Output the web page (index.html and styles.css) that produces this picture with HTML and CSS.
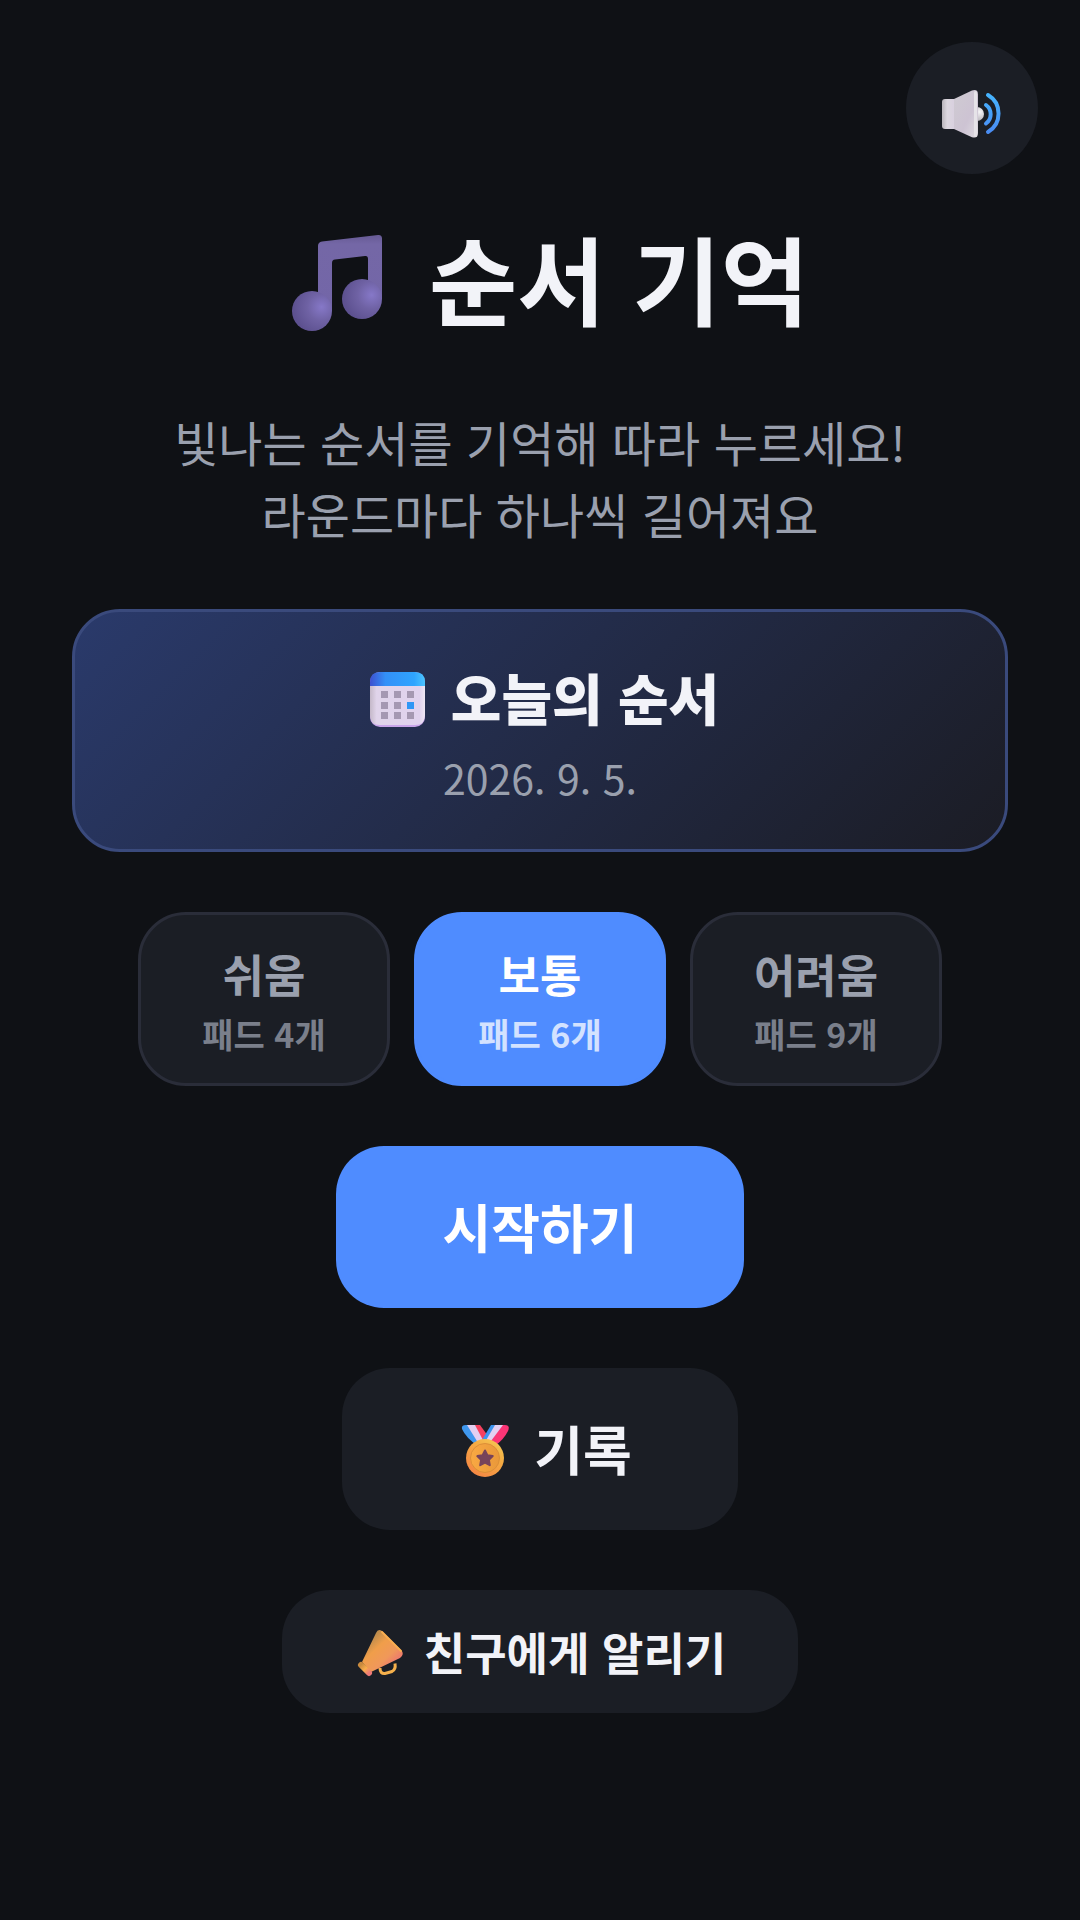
FILE: index.html
```
<!DOCTYPE html>
<html lang="ko">

<head>
    <meta charset="UTF-8">
    <meta name="viewport" content="width=device-width, initial-scale=1.0">
    <title>순서 기억</title>
    <link rel="stylesheet" href="styles.css">
</head>

<body>
    <button type="button" class="sound" aria-label="소리">
        <svg width="66" height="66" viewBox="0 0 66 66">
            <defs>
                <linearGradient id="spk" x1="0" y1="0" x2="1" y2="1">
                    <stop offset="0" stop-color="#cfcbd2" />
                    <stop offset=".6" stop-color="#cdc3d3" />
                    <stop offset="1" stop-color="#dedbe1" />
                </linearGradient>
                <linearGradient id="box" x1="0" y1="0" x2="1" y2="0">
                    <stop offset="0" stop-color="#b9b5bb" />
                    <stop offset=".4" stop-color="#dcd7df" />
                    <stop offset="1" stop-color="#d8cfdf" />
                </linearGradient>
                <linearGradient id="wave" x1="0" y1="0" x2="0" y2="1">
                    <stop offset="0" stop-color="#46b4ff" />
                    <stop offset="1" stop-color="#4a8cf2" />
                </linearGradient>
                <radialGradient id="knob" cx=".7" cy=".35" r=".7">
                    <stop offset="0" stop-color="#f6f5f7" />
                    <stop offset="1" stop-color="#b5b1b8" />
                </radialGradient>
            </defs>
            <circle cx="38" cy="39" r="7" fill="url(#knob)" />
            <path d="M6 24h10v30H6q-3 0-3-3V27q0-3 3-3z" fill="url(#box)" />
            <path d="M15 24L33 15.400q6-1.800 6 4V58q0 6-6 4.200L15 54z" fill="url(#spk)" />
            <path d="M36.500 17.500v43" stroke="#e6e3e8" stroke-width="3" stroke-linecap="round" />
            <path d="M47 30a11.500 11.500 0 0 1 0 18.500M49 20a21.500 21.500 0 0 1 0 37" fill="none" stroke="url(#wave)" stroke-width="4" stroke-linecap="round" />
        </svg>
    </button>

    <main class="home">
        <h1 class="title">
            <svg width="137" height="118" viewBox="-5 -14 137 118" aria-hidden="true">
                <defs>
                    <radialGradient id="head" cx=".74" cy=".4" r=".7">
                        <stop offset="0" stop-color="#8678c8" />
                        <stop offset=".5" stop-color="#6f62a4" />
                        <stop offset="1" stop-color="#5d5190" />
                    </radialGradient>
                    <linearGradient id="stem" x1="0" y1="0" x2="0" y2="1">
                        <stop offset="0" stop-color="#665a94" />
                        <stop offset=".12" stop-color="#7467a6" />
                        <stop offset="1" stop-color="#7366a8" />
                    </linearGradient>
                </defs>
                <path d="M42 80V15q0-4 4-4.500L102 4q4-.4 4 3.500V68H92V28q0-3.500-3-3L59 28.500q-3 .4-3 3.500V80z" fill="url(#stem)" />
                <circle cx="36" cy="80" r="20" fill="url(#head)" />
                <circle cx="86" cy="68" r="20" fill="url(#head)" />
            </svg>
            순서 기억
        </h1>

        <p class="desc">빛나는 순서를 기억해 따라 누르세요!<br>라운드마다 하나씩 길어져요</p>

        <button type="button" class="daily">
            <span class="daily-title">
                <svg width="74" height="61" viewBox="0 -5 74 61" aria-hidden="true">
                    <defs>
                        <linearGradient id="cal" x1="0" y1="0" x2="1" y2="0">
                            <stop offset="0" stop-color="#3d50cf" />
                            <stop offset=".28" stop-color="#3390f8" />
                            <stop offset=".8" stop-color="#2fa4ff" />
                            <stop offset="1" stop-color="#4cc4ff" />
                        </linearGradient>
                        <linearGradient id="paper" x1="0" y1="0" x2="1" y2="0">
                            <stop offset="0" stop-color="#c4b8c8" />
                            <stop offset=".12" stop-color="#e0d4ea" />
                            <stop offset=".9" stop-color="#e0d2ee" />
                            <stop offset="1" stop-color="#efe8f4" />
                        </linearGradient>
                    </defs>
                    <rect x="9" y="1" width="55" height="55" rx="10" fill="#c9a5ea" />
                    <path d="M9 14h55v30q0 10-10 10H19q-10 0-10-10z" fill="url(#paper)" />
                    <path d="M9 15v-4Q9 1 19 1h35q10 0 10 10v4z" fill="url(#cal)" />
                    <path d="M20 20h7v7h-7zM33 20h7v7h-7zM46 20h7v7h-7zM20 31h7v7h-7zM33 31h7v7h-7zM20 41h7v7h-7zM33 41h7v7h-7zM46 41h7v7h-7z" fill="#a598b2" />
                    <path d="M46 31h7v7h-7z" fill="#2f96f5" />
                </svg>
                오늘의 순서
            </span>
            <span class="daily-date">2026. 9. 5.</span>
        </button>

        <div class="levels">
            <button type="button" class="level">쉬움<small>패드 4개</small></button>
            <button type="button" class="level active">보통<small>패드 6개</small></button>
            <button type="button" class="level">어려움<small>패드 9개</small></button>
        </div>

        <button type="button" class="btn start">시작하기</button>

        <button type="button" class="btn">
            <svg width="74" height="60" viewBox="0 0 74 60" aria-hidden="true">
                <defs>
                    <linearGradient id="gold" x1=".9" y1="0" x2=".2" y2="1">
                        <stop offset="0" stop-color="#f5cc55" />
                        <stop offset=".4" stop-color="#f5aa42" />
                        <stop offset="1" stop-color="#f58444" />
                    </linearGradient>
                    <linearGradient id="coin" x1="0" y1="0" x2="1" y2="0">
                        <stop offset="0" stop-color="#f9a943" />
                        <stop offset="1" stop-color="#e9983a" />
                    </linearGradient>
                </defs>
                <path d="M18 7h7l14 17-9 4Q18 20 14 11q-1-4 4-4z" fill="#3f97ee" />
                <path d="M19 7h9l12 17-8 4z" fill="#e3cff2" />
                <path d="M27 7h5l8 11-4 6z" fill="#f7405e" />
                <path d="M43 7h8L39 25l-5-3z" fill="#3d94ef" />
                <path d="M47 7h9L44 27l-7-3z" fill="#e3cff2" />
                <path d="M55 7q8-1 5 6-4 8-12 14l-5-4z" fill="#fb3576" />
                <circle cx="37" cy="40" r="19" fill="url(#gold)" />
                <circle cx="37" cy="40" r="14.500" fill="url(#coin)" stroke="#dc8f38" />
                <path d="M37 32.500l2.400 4.800 5.300.8-3.800 3.800.9 5.300-4.800-2.500-4.800 2.500.9-5.300-3.800-3.800 5.300-.8z" fill="#77435a" stroke="#77435a" stroke-width="2" stroke-linejoin="round" />
            </svg>
            기록
        </button>

        <button type="button" class="btn share">
            <svg width="62" height="52" viewBox="0 0 62 52" aria-hidden="true">
                <defs>
                    <linearGradient id="horn" x1=".2" y1=".2" x2=".75" y2=".8">
                        <stop offset="0" stop-color="#b98a4c" />
                        <stop offset=".35" stop-color="#f09e4a" />
                        <stop offset=".75" stop-color="#f0985a" />
                        <stop offset="1" stop-color="#ee7d6b" />
                    </linearGradient>
                    <linearGradient id="mouth" x1="0" y1="0" x2="1" y2="1">
                        <stop offset="0" stop-color="#c98a3e" />
                        <stop offset=".5" stop-color="#fbae4b" />
                        <stop offset="1" stop-color="#ee7a78" />
                    </linearGradient>
                </defs>
                <path d="M26 43q0 6 5 5.500l7-2q4-2 3-8" fill="none" stroke="#f5b04c" stroke-width="3" />
                <path d="M8 37L22 8q2-5 6-2l19 19q4 4-1 8L17 47z" fill="url(#horn)" />
                <path d="M28 7l19 19" stroke="#f9ae50" stroke-width="2" stroke-linecap="round" />
                <path d="M7 40l8 8" stroke="url(#mouth)" stroke-width="6" stroke-linecap="round" />
            </svg>
            친구에게 알리기
        </button>
    </main>
</body>

</html>
```
FILE: styles.css
```
* {
    box-sizing: border-box;
}

body {
    margin: 0;
    background-color: #0f1115;
    color: #f2f3f8;
    font-family: "Noto Sans CJK KR", sans-serif;
}

button {
    border: none;
    color: inherit;
    font-family: inherit;
    cursor: pointer;
}

.sound {
    position: absolute;
    top: 42px;
    right: 42px;
    width: 132px;
    height: 132px;
    padding: 0;
    border-radius: 50%;
    background-color: #1b1e25;
    display: flex;
    align-items: center;
    justify-content: center;
}

.home {
    min-height: 100vh;
    padding: 0 72px;
    display: flex;
    flex-direction: column;
    align-items: center;
    justify-content: center;
    gap: 60px;
}

.title {
    margin: 0;
    display: flex;
    align-items: center;
    gap: 21px;
    font-size: 96px;
    line-height: 137px;
    font-weight: 700;
}

.desc {
    margin: 0;
    color: #9aa0ae;
    font-size: 48px;
    line-height: 72px;
    text-align: center;
}

.daily {
    width: 100%;
    padding: 45px;
    border: 3px solid #3a4a7c;
    border-radius: 48px;
    background: linear-gradient(135deg, #2a3a6b, #1b1c24);
    display: flex;
    flex-direction: column;
    align-items: center;
    gap: 14px;
}

.daily-title {
    display: flex;
    align-items: center;
    gap: 16px;
    font-size: 55px;
    line-height: 79px;
    font-weight: 800;
}

.daily-date {
    color: #9aa0ae;
    font-size: 41px;
    line-height: 54px;
}

.levels {
    display: flex;
    gap: 24px;
}

.level {
    min-width: 252px;
    padding: 26px 48px;
    border: 3px solid #2a2d39;
    border-radius: 48px;
    background-color: #1b1e25;
    color: #9aa0ae;
    font-size: 45px;
    line-height: 65px;
    font-weight: 700;
}

.level small {
    display: block;
    margin-top: 5px;
    font-size: 34px;
    line-height: 46px;
    opacity: 0.75;
}

.level.active {
    border-color: #4f8cff;
    background-color: #4f8cff;
    color: #fff;
}

.btn {
    padding: 41px 106px 43px;
    border-radius: 48px;
    background-color: #1b1e25;
    display: flex;
    align-items: center;
    gap: 12px;
    font-size: 53px;
    line-height: 78px;
    font-weight: 700;
}

.start {
    background-color: #4f8cff;
    color: #fff;
}

.share {
    padding: 29px 72px;
    gap: 8px;
    font-size: 45px;
    line-height: 65px;
}
```
